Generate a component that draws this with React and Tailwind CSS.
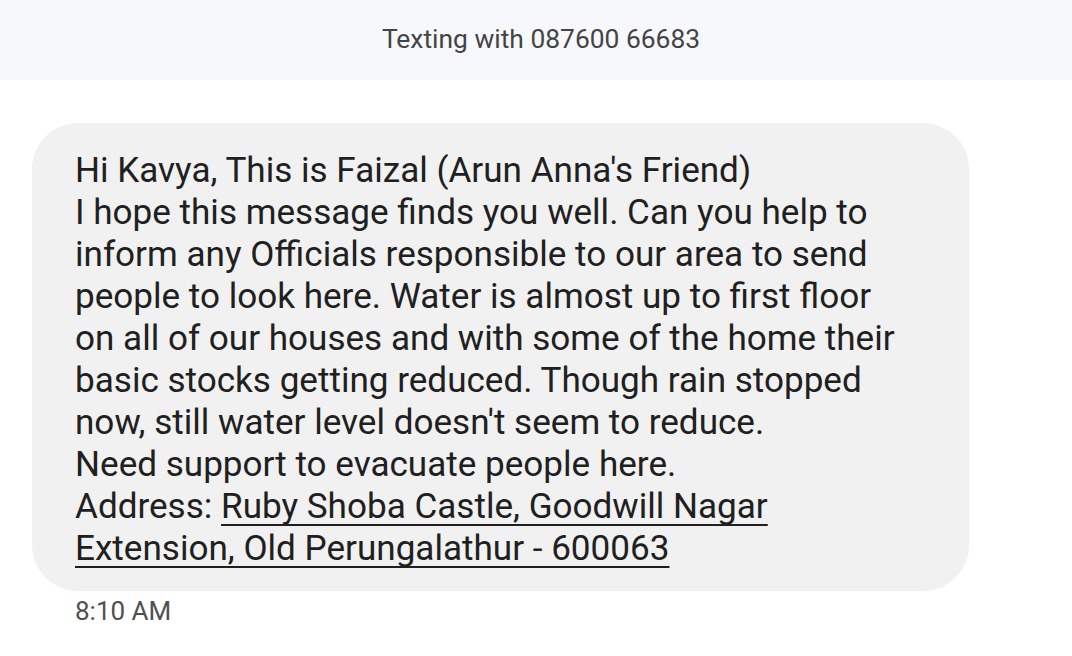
export default function App() {
  const lines = [
    "Hi Kavya, This is Faizal (Arun Anna's Friend)",
    "I hope this message finds you well. Can you help to",
    "inform any Officials responsible to our area to send",
    "people to look here. Water is almost up to first floor",
    "on all of our houses and with some of the home their",
    "basic stocks getting reduced. Though rain stopped",
    "now, still water level doesn't seem to reduce.",
    "Need support to evacuate people here.",
  ];
  return (
    <div className="w-[1072px] h-[656px] bg-white overflow-hidden" style={{ fontFamily: "Roboto, 'Noto Sans', sans-serif" }}>
      <div className="h-[80px] bg-[#f7f8fc] flex items-center justify-center pl-[10px] text-[26.4px] text-[#444444]">
        Texting with 087600 66683
      </div>
      <div className="pl-[32px] pt-[43px]">
        <div className="w-[937px] bg-[#f1f1f1] rounded-[46px] pl-[43px] pt-[26px] pb-[22px] text-[35.1px] leading-[42px] text-[#202020]">
          {lines.map((l, i) => (
            <div key={i} className="whitespace-nowrap">{l}</div>
          ))}
          <div className="whitespace-nowrap">
            Address: <span className="underline decoration-[2px] underline-offset-[6px] [text-decoration-skip-ink:none]">Ruby Shoba Castle, Goodwill Nagar</span>
          </div>
          <div className="whitespace-nowrap">
            <span className="underline decoration-[2px] underline-offset-[6px] [text-decoration-skip-ink:none]">Extension, Old Perungalathur - 600063</span>
          </div>
        </div>
        <div className="pl-[43px] pt-[6px] text-[26px] leading-[28px] text-[#505050]">8:10 AM</div>
      </div>
    </div>
  );
}
